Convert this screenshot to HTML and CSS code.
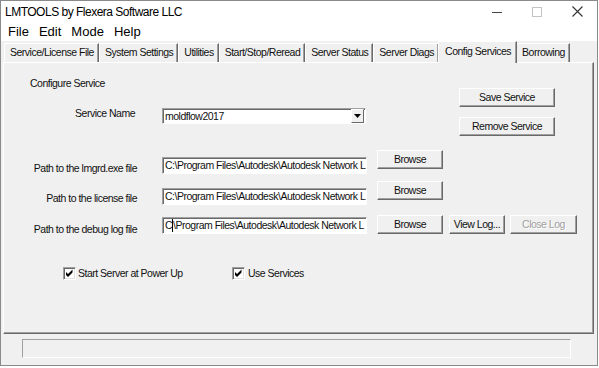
FILE: index.html
```html
<!DOCTYPE html>
<html>
<head>
<meta charset="utf-8">
<link rel="stylesheet" href="styles.css">
</head>
<body>
<div class="window">
  <div class="titlebar">
    <span class="title">LMTOOLS by Flexera Software LLC</span>
    <div class="controls">
      <span class="ctl"><svg width="10" height="10" viewBox="0 0 10 10"><line x1="0" y1="5.5" x2="10" y2="5.5" stroke="#444" stroke-width="1"/></svg></span>
      <span class="ctl"><svg width="10" height="10" viewBox="0 0 10 10"><rect x="0.5" y="0.5" width="9" height="9" fill="none" stroke="#c4c4c4" stroke-width="1"/></svg></span>
      <span class="ctl"><svg width="11" height="11" viewBox="0 0 11 11"><path d="M0.5 0.5 L10.5 10.5 M10.5 0.5 L0.5 10.5" stroke="#333" stroke-width="1.1" fill="none"/></svg></span>
    </div>
  </div>
  <div class="menubar">
    <span class="menu">File</span>
    <span class="menu">Edit</span>
    <span class="menu">Mode</span>
    <span class="menu">Help</span>
  </div>
  <div class="client">
    <div class="tabs">
      <span class="tab">Service/License File</span>
      <span class="tab">System Settings</span>
      <span class="tab">Utilities</span>
      <span class="tab">Start/Stop/Reread</span>
      <span class="tab">Server Status</span>
      <span class="tab">Server Diags</span>
      <span class="tab active">Config Services</span>
      <span class="tab">Borrowing</span>
    </div>
    <div class="panel">
      <div class="top">
        <div class="top-left">
          <div class="heading">Configure Service</div>
          <div class="service-row">
            <span class="lbl">Service Name</span>
            <div class="combo">
              <span class="combo-text">moldflow2017</span>
              <span class="arrow"><svg width="7" height="4" viewBox="0 0 7 4"><path d="M0 0 H7 L3.5 4 Z" fill="#000"/></svg></span>
            </div>
          </div>
        </div>
        <div class="top-right">
          <button class="btn w-save">Save Service</button>
          <button class="btn w-save remove">Remove Service</button>
        </div>
      </div>
      <div class="path-row r1">
        <span class="lbl">Path to the lmgrd.exe file</span>
        <div class="field">C:\Program Files\Autodesk\Autodesk Network L</div>
        <button class="btn w-browse">Browse</button>
      </div>
      <div class="path-row r2">
        <span class="lbl">Path to the license file</span>
        <div class="field">C:\Program Files\Autodesk\Autodesk Network L</div>
        <button class="btn w-browse">Browse</button>
      </div>
      <div class="path-row r3">
        <span class="lbl">Path to the debug log file</span>
        <div class="field">C<span class="caret"></span>\Program Files\Autodesk\Autodesk Network L</div>
        <button class="btn w-browse">Browse</button>
        <button class="btn w-view">View Log...</button>
        <button class="btn w-close disabled">Close Log</button>
      </div>
      <div class="checks">
        <label class="check check1">
          <span class="box"><svg width="11" height="11" viewBox="0 0 11 11"><path d="M2 4 L4 6 L8.5 1.5 L8.5 4.5 L4 9 L2 7 Z" fill="#000"/></svg></span>
          <span>Start Server at Power Up</span>
        </label>
        <label class="check check2">
          <span class="box"><svg width="11" height="11" viewBox="0 0 11 11"><path d="M2 4 L4 6 L8.5 1.5 L8.5 4.5 L4 9 L2 7 Z" fill="#000"/></svg></span>
          <span>Use Services</span>
        </label>
      </div>
    </div>
    <div class="status"></div>
  </div>
</div>
</body>
</html>
```
FILE: styles.css
```css
* { box-sizing: border-box; }
html, body { margin: 0; padding: 0; background: #fff; }
body {
  width: 599px;
  height: 368px;
  font-family: "Liberation Sans", Arial, sans-serif;
  color: #000;
  overflow: hidden;
}
.window {
  width: 598px;
  height: 366px;
  border: 1px solid #8a8a8a;
  display: flex;
  flex-direction: column;
  background: #fff;
}
.titlebar {
  height: 21px;
  display: flex;
  align-items: center;
  font-size: 12px;
}
.title {
  padding-left: 4px;
  letter-spacing: -0.5px;
}
.controls {
  margin-left: auto;
  display: flex;
  height: 21px;
}
.ctl {
  width: 40px;
  display: flex;
  align-items: center;
  justify-content: center;
}
.menubar {
  height: 19px;
  display: flex;
  align-items: center;
  gap: 10px;
  padding-left: 7px;
  font-size: 13px;
}
.client {
  flex: 1;
  background: #f0f0f0;
  display: flex;
  flex-direction: column;
  font-size: 10.5px;
  letter-spacing: -0.5px;
  color: #111;
}
.tabs {
  height: 21px;
  display: flex;
  align-items: flex-start;
  padding-left: 3px;
}
.tab {
  margin-top: 2px;
  height: 19px;
  padding: 0 4px 0 5px;
  line-height: 17px;
  border-top: 1px solid #fff;
  border-left: 1px solid #fff;
  border-right: 1px solid #696969;
  box-shadow: inset -1px 0 #a0a0a0;
  white-space: nowrap;
}
.tab.active {
  margin: 0 -1px 0 -1px;
  height: 22px;
  padding: 1px 5px 0 6px;
  position: relative;
  z-index: 1;
  background: #f0f0f0;
}
.panel {
  margin-left: 2px;
  width: 591px;
  height: 272px;
  border: 1px solid;
  border-color: #fff #696969 #696969 #fff;
  box-shadow: inset -1px -1px #a0a0a0;
}
.top {
  display: flex;
  height: 87px;
}
.top-left {
  display: flex;
  flex-direction: column;
}
.heading {
  margin: 14px 0 0 26px;
  line-height: 13px;
}
.service-row {
  margin-top: 18px;
  display: flex;
  align-items: flex-start;
}
.lbl {
  width: 133px;
  flex: none;
  text-align: right;
  line-height: 13px;
  white-space: nowrap;
}
.service-row .lbl {
  padding-right: 2px;
  margin-top: -1px;
}
.combo {
  margin-left: 25px;
  width: 204px;
  height: 16px;
  display: flex;
  align-items: center;
  background: #fff;
  border: 1px solid;
  border-color: #a0a0a0 #fff #fff #a0a0a0;
  box-shadow: inset 1px 1px #696969;
}
.combo-text {
  padding-left: 2px;
  line-height: 14px;
}
.arrow {
  margin-left: auto;
  margin-right: 1px;
  width: 13px;
  height: 14px;
  display: flex;
  align-items: center;
  justify-content: center;
  background: #f0f0f0;
  border: 1px solid;
  border-color: #fff #696969 #696969 #fff;
}
.top-right {
  margin-left: auto;
  margin-right: 38px;
  display: flex;
  flex-direction: column;
}
.btn {
  height: 19px;
  padding: 0;
  font-family: inherit;
  font-size: 10.5px;
  letter-spacing: -0.5px;
  line-height: 17px;
  text-align: center;
  color: #111;
  background: #f0f0f0;
  border: 1px solid;
  border-color: #fff #696969 #696969 #fff;
  box-shadow: inset -1px -1px #a0a0a0;
  flex: none;
  white-space: nowrap;
}
.top-right .btn:first-child { margin-top: 25px; }
.top-right .remove { margin-top: 10px; }
.w-save { width: 96px; }
.w-browse { width: 66px; margin-left: 10px; }
.w-view { width: 56px; margin-left: 6px; }
.w-close { width: 67px; margin-left: 5px; }
.btn.disabled {
  color: #a0a0a0;
  text-shadow: 1px 1px #fff;
}
.path-row {
  display: flex;
  align-items: flex-start;
}
.field {
  margin-left: 25px;
  width: 205px;
  height: 17px;
  flex: none;
  padding-left: 2px;
  line-height: 15px;
  white-space: nowrap;
  overflow: hidden;
  background: #fff;
  border: 1px solid;
  border-color: #a0a0a0 #fff #fff #a0a0a0;
  box-shadow: inset 1px 1px #696969;
}
.caret {
  display: inline-block;
  width: 0;
  height: 13px;
  border-left: 1px solid #000;
  vertical-align: -3px;
}
.r1 { height: 31px; }
.r1 .lbl { margin-top: 12px; }
.r1 .field { margin-top: 7px; }
.r2 { height: 34px; }
.r2 .lbl { margin-top: 11px; }
.r2 .field { margin-top: 7px; }
.r3 { height: 52px; }
.r3 .lbl { margin-top: 8px; }
.r3 .field { margin-top: 2px; }
.checks {
  display: flex;
  align-items: center;
  height: 13px;
}
.check {
  display: flex;
  align-items: center;
  gap: 2px;
  line-height: 13px;
}
.check1 {
  margin-left: 59px;
  width: 169px;
  flex: none;
}
.check2 { gap: 3px; }
.box {
  width: 13px;
  height: 13px;
  display: flex;
  align-items: center;
  justify-content: center;
  background: #fff;
  border: 1px solid;
  border-color: #a0a0a0 #fff #fff #a0a0a0;
  box-shadow: inset 1px 1px #696969, inset -1px -1px #e3e3e3;
}
.status {
  margin: 5px 0 0 21px;
  width: 549px;
  height: 19px;
  border: 1px solid;
  border-color: #a0a0a0 #fff #fff #a0a0a0;
}
```
